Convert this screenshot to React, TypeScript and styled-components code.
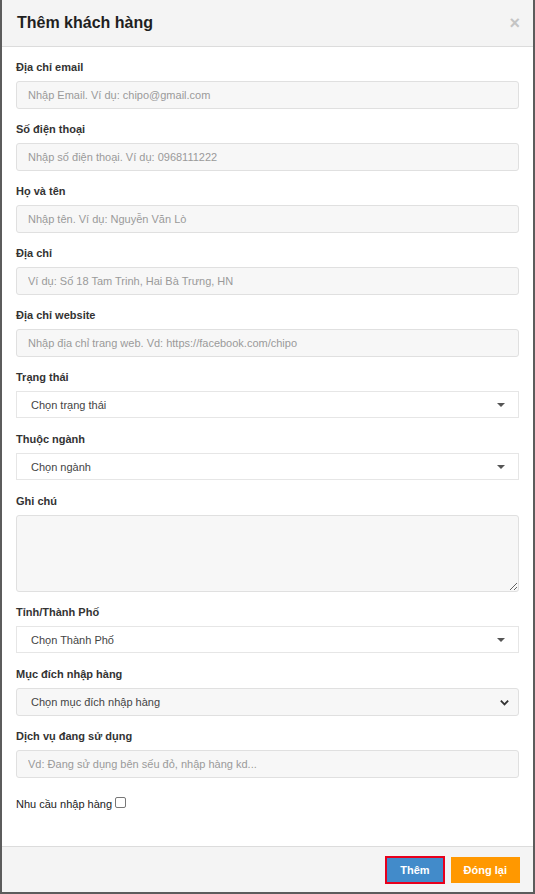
import styled, { createGlobalStyle } from "styled-components";

const GlobalStyle = createGlobalStyle`
  html, body {
    margin: 0;
    padding: 0;
    background: #5c5c5c;
    font-family: "Liberation Sans", Arial, sans-serif;
  }
  * { box-sizing: border-box; }
`;

const Backdrop = styled.div`
  width: 535px;
  height: 894px;
  padding: 0 2px 2px 2px;
  background: #5c5c5c;
`;

const Modal = styled.div`
  width: 531px;
  height: 892px;
  background: #fff;
  display: flex;
  flex-direction: column;
`;

const Header = styled.div`
  height: 47px;
  flex-shrink: 0;
  display: flex;
  align-items: center;
  justify-content: space-between;
  padding: 0 13px 0 15px;
  background: #f4f4f4;
  border-bottom: 1px solid #dcdcdc;
`;

const Title = styled.h4`
  margin: 0;
  font-size: 16px;
  font-weight: 700;
  color: #1f1f1f;
`;

const Close = styled.span`
  font-size: 18px;
  font-weight: 700;
  color: #c4c4c4;
  line-height: 1;
`;

const Body = styled.div`
  flex: 1;
  padding: 12px 14px 0 14px;
`;

const Group = styled.div<{ $gap?: number }>`
  display: flex;
  flex-direction: column;
  margin-bottom: ${(p) => p.$gap ?? 12}px;
`;

const Label = styled.label`
  font-size: 11px;
  font-weight: 700;
  line-height: 17px;
  color: #333;
  margin-bottom: 5px;
`;

const Input = styled.input`
  height: 28px;
  width: 100%;
  padding: 0 11px;
  font-family: inherit;
  font-size: 11px;
  color: #555;
  background: #f7f7f7;
  border: 1px solid #e0e0e0;
  border-radius: 3px;
  outline: none;
  &::placeholder { color: #9a9a9a; }
`;

const TextArea = styled.textarea`
  height: 77px;
  width: 100%;
  padding: 6px 12px;
  font-family: inherit;
  font-size: 11px;
  background: #f7f7f7;
  border: 1px solid #e0e0e0;
  border-radius: 3px;
  resize: vertical;
  outline: none;
`;

const FakeSelect = styled.div`
  height: 27px;
  display: flex;
  align-items: center;
  justify-content: space-between;
  padding: 0 12px 0 14px;
  font-size: 11px;
  color: #444;
  background: #fff;
  border: 1px solid #e6e6e6;
`;

const Caret = styled.span`
  width: 0;
  height: 0;
  border-left: 4px solid transparent;
  border-right: 4px solid transparent;
  border-top: 4px solid #555;
  margin-right: 1px;
`;

const NativeSelect = styled.div`
  height: 28px;
  display: flex;
  align-items: center;
  justify-content: space-between;
  padding: 0 8px 0 14px;
  font-size: 11px;
  color: #444;
  background: #f7f7f7;
  border: 1px solid #e0e0e0;
  border-radius: 3px;
`;

const CheckRow = styled.div`
  display: flex;
  align-items: center;
  gap: 3px;
  margin-top: 20px;
  font-size: 11px;
  color: #222;
`;

const Box = styled.span`
  width: 11px;
  height: 11px;
  border: 1px solid #777;
  border-radius: 2px;
  background: #fff;
  margin-top: -3px;
`;

const Footer = styled.div`
  height: 46px;
  flex-shrink: 0;
  display: flex;
  align-items: center;
  justify-content: flex-end;
  gap: 6px;
  padding: 0 13px;
  background: #f4f4f4;
  border-top: 1px solid #dcdcdc;
`;

const Button = styled.button<{ $color: string; $focused?: boolean }>`
  height: ${(p) => (p.$focused ? 28 : 26)}px;
  padding: 0 13px;
  font-family: inherit;
  font-size: 11px;
  font-weight: 700;
  color: #fff;
  background: ${(p) => p.$color};
  border: ${(p) => (p.$focused ? "2px solid #e8001c" : "none")};
  border-radius: 0;
`;

const fields = [
  { label: "Địa chỉ email", placeholder: "Nhập Email. Ví dụ: chipo@gmail.com" },
  { label: "Số điện thoại", placeholder: "Nhập số điện thoại. Ví dụ: 0968111222" },
  { label: "Họ và tên", placeholder: "Nhập tên. Ví dụ: Nguyễn Văn Lò" },
  { label: "Địa chỉ", placeholder: "Ví dụ: Số 18 Tam Trinh, Hai Bà Trưng, HN" },
  { label: "Địa chỉ website", placeholder: "Nhập địa chỉ trang web. Vd: https://facebook.com/chipo" },
];

const Chevron = () => (
  <svg width="11" height="11" viewBox="0 0 12 12">
    <path d="M2 4l4 4 4-4" fill="none" stroke="#333" strokeWidth="2" />
  </svg>
);

export default function App() {
  return (
    <>
      <GlobalStyle />
      <Backdrop>
        <Modal>
          <Header>
            <Title>Thêm khách hàng</Title>
            <Close>×</Close>
          </Header>
          <Body>
            {fields.map((f) => (
              <Group key={f.label}>
                <Label>{f.label}</Label>
                <Input placeholder={f.placeholder} />
              </Group>
            ))}
            <Group $gap={13}>
              <Label>Trạng thái</Label>
              <FakeSelect>
                Chọn trạng thái
                <Caret />
              </FakeSelect>
            </Group>
            <Group $gap={13}>
              <Label>Thuộc ngành</Label>
              <FakeSelect>
                Chọn ngành
                <Caret />
              </FakeSelect>
            </Group>
            <Group>
              <Label>Ghi chú</Label>
              <TextArea />
            </Group>
            <Group $gap={13}>
              <Label>Tỉnh/Thành Phố</Label>
              <FakeSelect>
                Chọn Thành Phố
                <Caret />
              </FakeSelect>
            </Group>
            <Group>
              <Label>Mục đích nhập hàng</Label>
              <NativeSelect>
                Chọn mục đích nhập hàng
                <Chevron />
              </NativeSelect>
            </Group>
            <Group>
              <Label>Dịch vụ đang sử dụng</Label>
              <Input placeholder="Vd: Đang sử dụng bên sếu đỏ, nhập hàng kd..." />
            </Group>
            <CheckRow>
              Nhu cầu nhập hàng
              <Box />
            </CheckRow>
          </Body>
          <Footer>
            <Button $color="#428bca" $focused>Thêm</Button>
            <Button $color="#ff9800">Đóng lại</Button>
          </Footer>
        </Modal>
      </Backdrop>
    </>
  );
}
